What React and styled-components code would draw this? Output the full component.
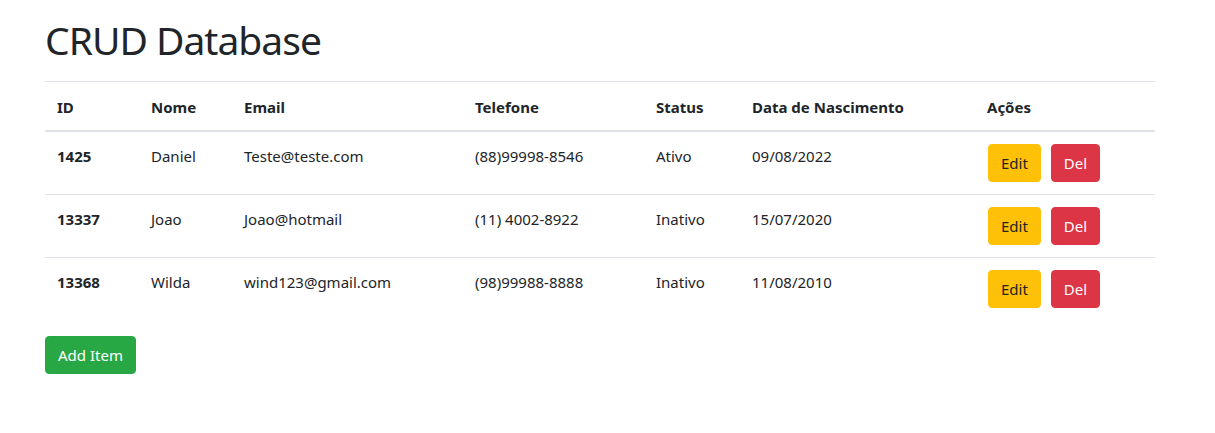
import React from 'react'
import styled, { createGlobalStyle } from 'styled-components'

const GlobalStyle = createGlobalStyle`
  body {
    margin: 0;
    background: #fff;
    color: #212529;
    font-family: "Noto Sans", "Open Sans", sans-serif;
    font-size: 16px;
    line-height: 1.5;
  }
`

const Container = styled.div`
  width: 1110px;
  padding: 16px 0 0 45px;
`

const Title = styled.h1`
  margin: 0 0 17px;
  font-size: 39px;
  font-weight: 400;
  line-height: 48px;
  letter-spacing: -1px;
`

const Table = styled.table`
  width: 100%;
  border-collapse: collapse;
  margin-bottom: 16px;
  font-size: 15px;

  th, td {
    padding: 13px 12px 11px;
    text-align: left;
    vertical-align: top;
    border-top: 1px solid #dee2e6;
  }
  thead th {
    padding: 14px 12px 11px;
    border-bottom: 2px solid #dee2e6;
    font-weight: 700;
  }
`

const IdCell = styled.td`
  font-weight: 700;
`

const ActionCell = styled.td`
  && {
    padding: 12px;
  }
`

const Actions = styled.div`
  display: flex;
  gap: 10px;
  padding-left: 1px;
`

const Button = styled.button`
  font-family: inherit;
  font-size: 15px;
  line-height: 24px;
  height: 38px;
  padding: 6px 12px;
  border: 1px solid ${p => p.$bg};
  border-radius: 4px;
  background: ${p => p.$bg};
  color: ${p => p.$fg};
  cursor: pointer;
`

const widths = [94, 93, 231, 181, 96, 235, 180]
const headers = ['ID', 'Nome', 'Email', 'Telefone', 'Status', 'Data de Nascimento', 'Ações']

const rows = [
  { id: '1425', nome: 'Daniel', email: 'Teste@teste.com', tel: '(88)99998-8546', status: 'Ativo', data: '09/08/2022' },
  { id: '13337', nome: 'Joao', email: 'Joao@hotmail', tel: '(11) 4002-8922', status: 'Inativo', data: '15/07/2020' },
  { id: '13368', nome: 'Wilda', email: 'wind123@gmail.com', tel: '(98)99988-8888', status: 'Inativo', data: '11/08/2010' },
]

export default function App() {
  return (
    <Container>
      <GlobalStyle />
      <Title>CRUD Database</Title>
      <Table>
        <colgroup>
          {widths.map((w, i) => <col key={i} style={{ width: w }} />)}
        </colgroup>
        <thead>
          <tr>
            {headers.map(h => <th key={h}>{h}</th>)}
          </tr>
        </thead>
        <tbody>
          {rows.map(r => (
            <tr key={r.id}>
              <IdCell>{r.id}</IdCell>
              <td>{r.nome}</td>
              <td>{r.email}</td>
              <td>{r.tel}</td>
              <td>{r.status}</td>
              <td>{r.data}</td>
              <ActionCell>
                <Actions>
                  <Button $bg="#ffc107" $fg="#212529">Edit</Button>
                  <Button $bg="#dc3545" $fg="#fff">Del</Button>
                </Actions>
              </ActionCell>
            </tr>
          ))}
        </tbody>
      </Table>
      <Button $bg="#28a745" $fg="#fff">Add Item</Button>
    </Container>
  )
}
